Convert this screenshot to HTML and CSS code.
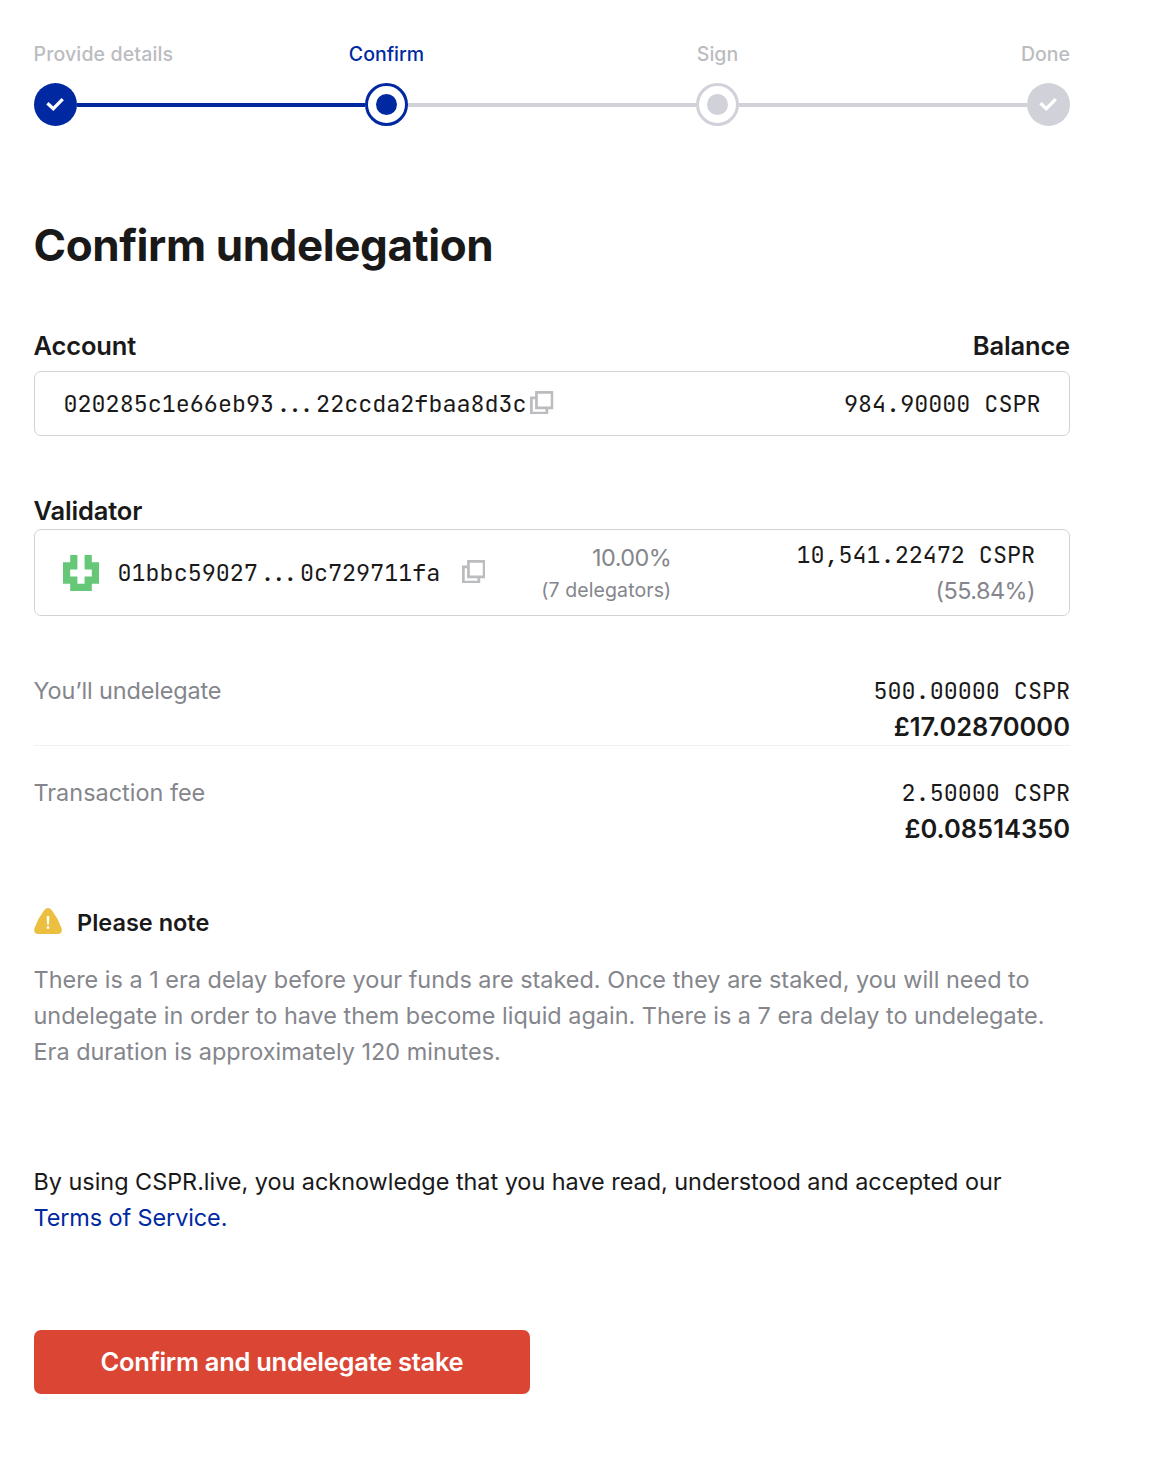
FILE: index.html
```html
<!DOCTYPE html>
<html lang="en">
<head>
<meta charset="utf-8">
<title>Confirm undelegation</title>
<link rel="stylesheet" href="styles.css">
</head>
<body>
<svg class="defs" aria-hidden="true">
  <symbol id="copy" viewBox="0 0 24 24">
    <path d="M6 6.9H1.4V22.6H17.2V18" fill="none" stroke="currentColor" stroke-width="2.8"/>
    <path d="M6.6 1.4H22.6V17.2H6.6Z" fill="none" stroke="currentColor" stroke-width="2.8"/>
  </symbol>
  <symbol id="check" viewBox="0 0 43 43">
    <path d="M13.4 20.2L19.3 25.6L28.7 16.2" fill="none" stroke="#fff" stroke-width="3.3"/>
  </symbol>
</svg>
<main class="page">
  <div class="stepper">
    <div class="step step-first">
      <span class="step-label">Provide details</span>
      <span class="dot dot-filled dot-active"><svg><use href="#check"/></svg></span>
    </div>
    <div class="line line-active"></div>
    <div class="step step-current">
      <span class="step-label">Confirm</span>
      <span class="dot dot-ring dot-active"></span>
    </div>
    <div class="line"></div>
    <div class="step">
      <span class="step-label">Sign</span>
      <span class="dot dot-ring"></span>
    </div>
    <div class="line"></div>
    <div class="step step-last">
      <span class="step-label">Done</span>
      <span class="dot dot-filled"><svg><use href="#check"/></svg></span>
    </div>
  </div>

  <h1 class="title">Confirm undelegation</h1>

  <div class="field-head"><h2>Account</h2><h2>Balance</h2></div>
  <div class="box account">
    <span class="mono hash">020285c1e66eb93<span class="dots">...</span>22ccda2fbaa8d3c</span>
    <svg class="copy"><use href="#copy"/></svg>
    <span class="mono balance">984.90000 CSPR</span>
  </div>

  <div class="field-head validator-head"><h2>Validator</h2></div>
  <div class="box validator">
    <svg class="avatar" viewBox="0 0 5 5">
      <path fill="#66c777" d="M1 0H2V2H1V3H2V4H3V3H4V2H3V0H4V1H5V4H4V5H1V4H0V1H1Z"/>
    </svg>
    <span class="mono hash">01bbc59027<span class="dots">...</span>0c729711fa</span>
    <svg class="copy"><use href="#copy"/></svg>
    <div class="fee"><span class="percent">10.00%</span><span class="delegators">(7 delegators)</span></div>
    <div class="stake"><span class="mono">10,541.22472 CSPR</span><span class="percent">(55.84%)</span></div>
  </div>

  <div class="row row-first">
    <span class="row-name">You’ll undelegate</span>
    <div class="amount"><span class="mono">500.00000 CSPR</span><strong class="fiat">£17.02870000</strong></div>
  </div>
  <div class="row">
    <span class="row-name">Transaction fee</span>
    <div class="amount"><span class="mono">2.50000 CSPR</span><strong class="fiat">£0.08514350</strong></div>
  </div>

  <section class="note">
    <h3 class="note-head">
      <svg class="warn" viewBox="0 0 28 26">
        <path fill="#ecbf41" d="M10 2.4Q14-2.4 18 2.4Q24 10 27.5 20Q29 25.6 23.5 26H4.5Q-1 25.6 .5 20Q4 10 10 2.4Z"/>
        <path fill="#fff" d="M12.7 8H15.3L15 16.6H13ZM12.7 18.2H15.3V20.8H12.7Z"/>
      </svg>
      <span>Please note</span>
    </h3>
    <p class="note-text">There is a 1 era delay before your funds are staked. Once they are staked, you will need to<br>undelegate in order to have them become liquid again. There is a 7 era delay to undelegate.<br>Era duration is approximately 120 minutes.</p>
  </section>

  <p class="terms">By using CSPR.live, you acknowledge that you have read, understood and accepted our<br><a class="link" href="#">Terms of Service.</a></p>

  <button class="submit" type="button">Confirm and undelegate stake</button>
</main>
</body>
</html>
```
FILE: styles.css
```css
* { box-sizing: border-box; }
body {
  margin: 0;
  background: #fff;
  color: #1a1919;
  font: 400 23.44px/36px Inter, "Liberation Sans", sans-serif;
}
h1, h2, h3, p { margin: 0; }
.defs { position: absolute; width: 0; height: 0; }
.page { width: 1036px; margin-left: 34px; padding-top: 39px; }

.stepper { display: flex; align-items: flex-end; }
.step {
  width: 43px;
  display: flex;
  flex-direction: column;
  align-items: center;
  gap: 14px;
  color: #bbbcc0;
}
.step-first { align-items: flex-start; }
.step-first .step-label { margin-left: -0.5px; letter-spacing: 0.14px; }
.step-last { align-items: flex-end; }
.step-current { color: #0029a1; }
.step-label { font-size: 19.5px; line-height: 30px; font-weight: 500; white-space: nowrap; }
.dot {
  width: 43px;
  height: 43px;
  border-radius: 50%;
  display: flex;
  align-items: center;
  justify-content: center;
  color: #d1d2d9;
}
.dot-active { color: #0029a1; }
.dot-filled { background: currentColor; }
.dot-filled svg { width: 43px; height: 43px; }
.dot-ring { border: 3px solid currentColor; }
.dot-ring::after {
  content: "";
  width: 21.5px;
  height: 21.5px;
  border-radius: 50%;
  background: currentColor;
}
.line { flex: 1; height: 4px; margin-bottom: 19px; background: #d1d2d9; }
.line-active { background: #0029a1; }

.title { margin: 89px 0 0 -0.5px; font-size: 44px; line-height: 60px; font-weight: 700; letter-spacing: -0.42px; }

.field-head { display: flex; justify-content: space-between; margin-top: 53px; }
.field-head h2 { margin-left: -0.5px; font-size: 25.5px; line-height: 36px; font-weight: 600; letter-spacing: -0.16px; }
.validator-head { margin-top: 57px; }
.box { border: 1px solid #d1d2d3; border-radius: 7px; display: flex; align-items: center; }
.account { height: 65px; margin-top: 7px; padding: 0 28.5px; }
.validator { height: 87px; padding: 0 34px 0 28px; }
.mono {
  font-family: "JetBrains Mono", "DejaVu Sans Mono", monospace;
  font-size: 23.4px;
  white-space: pre;
}
.dots { letter-spacing: -2.6px; margin: 0 5.2px 0 2.6px; }
.copy { width: 23.5px; height: 23.5px; margin-bottom: 2px; color: #bbbcc0; flex: none; }
.account .copy { margin-left: 3.5px; }
.balance { margin-left: auto; }
.avatar { width: 36px; height: 36px; margin-right: 18.5px; }
.validator .copy { margin-left: 21.5px; }
.fee, .stake, .amount { display: flex; flex-direction: column; align-items: flex-end; }
.fee { width: 186px; padding-top: 2px; color: #84868c; line-height: 32px; }
.delegators { font-size: 19.5px; letter-spacing: 0.1px; }
.stake { margin-left: auto; }
.percent { color: #84868c; letter-spacing: -0.55px; }

.row { display: flex; justify-content: space-between; padding-top: 29px; }
.row-first { margin-top: 28px; border-bottom: 1px solid #f2f2f4; }
.row-name { margin-left: -0.5px; color: #84868c; }
.row-first .row-name { letter-spacing: -0.13px; }
.fiat { font-size: 25.5px; font-weight: 600; }

.note { margin-top: 58px; }
.note-head { display: flex; align-items: center; gap: 15px; font-size: 23.5px; font-weight: 600; }
.warn { width: 28px; height: 26px; margin-bottom: 4px; }
.note-text { margin: 21px 0 0 -0.5px; color: #84868c; white-space: nowrap; }
.terms { margin: 94px 0 0 -0.5px; white-space: nowrap; letter-spacing: -0.03px; }
.link { color: #0029a1; text-decoration: none; letter-spacing: -0.1px; }
.submit {
  display: block;
  width: 496px;
  height: 64px;
  margin-top: 94px;
  border: 0;
  border-radius: 7px;
  background: #db4534;
  color: #fff;
  font: 600 25.5px/36px Inter, "Liberation Sans", sans-serif;
  letter-spacing: -0.28px;
}
```
